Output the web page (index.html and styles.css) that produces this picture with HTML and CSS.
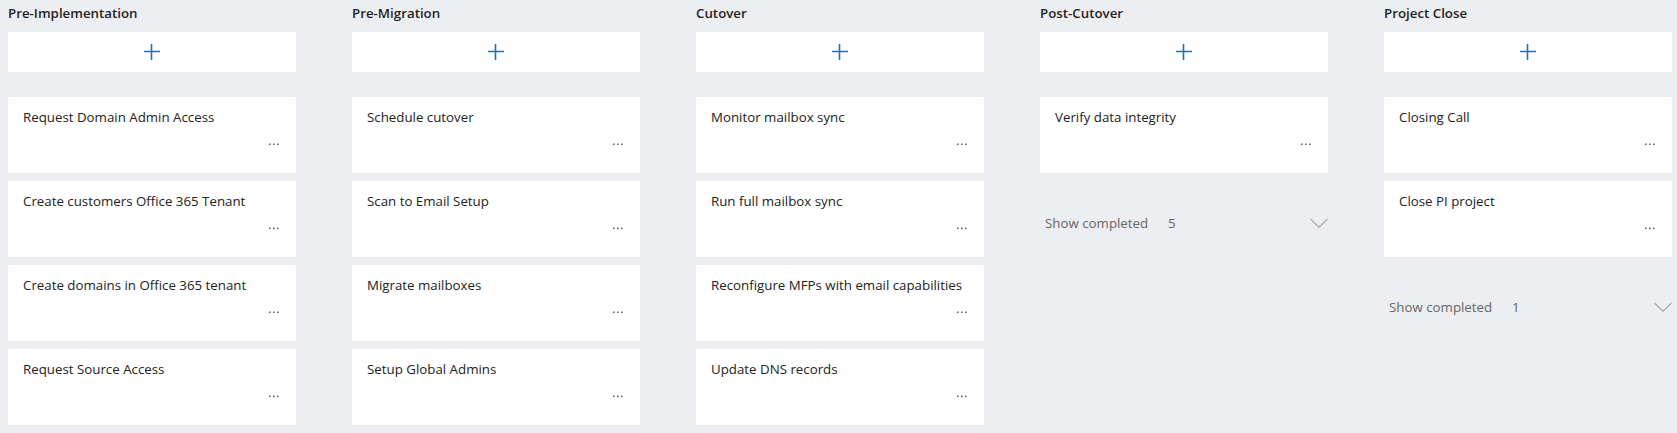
FILE: index.html
```html
<!DOCTYPE html>
<html>
<head>
<meta charset="utf-8">
<link rel="stylesheet" href="styles.css">
</head>
<body>
<div class="board">
  <section class="column">
    <h2 class="col-title">Pre-Implementation</h2>
    <button class="add-card" aria-label="Add task"><svg class="plus" width="16" height="16" viewBox="0 0 16 16"><path d="M0 7.5H16M7.5 0V16" /></svg></button>
    <div class="cards">
      <div class="card"><div class="card-title">Request Domain Admin Access</div><div class="card-more"><svg width="12" height="3" viewBox="0 0 12 3"><rect x="1" y="0.5" width="1.6" height="1.6"/><rect x="5" y="0.5" width="1.6" height="1.6"/><rect x="9" y="0.5" width="1.6" height="1.6"/></svg></div></div>
      <div class="card"><div class="card-title">Create customers Office 365 Tenant</div><div class="card-more"><svg width="12" height="3" viewBox="0 0 12 3"><rect x="1" y="0.5" width="1.6" height="1.6"/><rect x="5" y="0.5" width="1.6" height="1.6"/><rect x="9" y="0.5" width="1.6" height="1.6"/></svg></div></div>
      <div class="card"><div class="card-title">Create domains in Office 365 tenant</div><div class="card-more"><svg width="12" height="3" viewBox="0 0 12 3"><rect x="1" y="0.5" width="1.6" height="1.6"/><rect x="5" y="0.5" width="1.6" height="1.6"/><rect x="9" y="0.5" width="1.6" height="1.6"/></svg></div></div>
      <div class="card"><div class="card-title">Request Source Access</div><div class="card-more"><svg width="12" height="3" viewBox="0 0 12 3"><rect x="1" y="0.5" width="1.6" height="1.6"/><rect x="5" y="0.5" width="1.6" height="1.6"/><rect x="9" y="0.5" width="1.6" height="1.6"/></svg></div></div>
    </div>
  </section>
  <section class="column">
    <h2 class="col-title">Pre-Migration</h2>
    <button class="add-card" aria-label="Add task"><svg class="plus" width="16" height="16" viewBox="0 0 16 16"><path d="M0 7.5H16M7.5 0V16" /></svg></button>
    <div class="cards">
      <div class="card"><div class="card-title">Schedule cutover</div><div class="card-more"><svg width="12" height="3" viewBox="0 0 12 3"><rect x="1" y="0.5" width="1.6" height="1.6"/><rect x="5" y="0.5" width="1.6" height="1.6"/><rect x="9" y="0.5" width="1.6" height="1.6"/></svg></div></div>
      <div class="card"><div class="card-title">Scan to Email Setup</div><div class="card-more"><svg width="12" height="3" viewBox="0 0 12 3"><rect x="1" y="0.5" width="1.6" height="1.6"/><rect x="5" y="0.5" width="1.6" height="1.6"/><rect x="9" y="0.5" width="1.6" height="1.6"/></svg></div></div>
      <div class="card"><div class="card-title">Migrate mailboxes</div><div class="card-more"><svg width="12" height="3" viewBox="0 0 12 3"><rect x="1" y="0.5" width="1.6" height="1.6"/><rect x="5" y="0.5" width="1.6" height="1.6"/><rect x="9" y="0.5" width="1.6" height="1.6"/></svg></div></div>
      <div class="card"><div class="card-title">Setup Global Admins</div><div class="card-more"><svg width="12" height="3" viewBox="0 0 12 3"><rect x="1" y="0.5" width="1.6" height="1.6"/><rect x="5" y="0.5" width="1.6" height="1.6"/><rect x="9" y="0.5" width="1.6" height="1.6"/></svg></div></div>
    </div>
  </section>
  <section class="column">
    <h2 class="col-title">Cutover</h2>
    <button class="add-card" aria-label="Add task"><svg class="plus" width="16" height="16" viewBox="0 0 16 16"><path d="M0 7.5H16M7.5 0V16" /></svg></button>
    <div class="cards">
      <div class="card"><div class="card-title">Monitor mailbox sync</div><div class="card-more"><svg width="12" height="3" viewBox="0 0 12 3"><rect x="1" y="0.5" width="1.6" height="1.6"/><rect x="5" y="0.5" width="1.6" height="1.6"/><rect x="9" y="0.5" width="1.6" height="1.6"/></svg></div></div>
      <div class="card"><div class="card-title">Run full mailbox sync</div><div class="card-more"><svg width="12" height="3" viewBox="0 0 12 3"><rect x="1" y="0.5" width="1.6" height="1.6"/><rect x="5" y="0.5" width="1.6" height="1.6"/><rect x="9" y="0.5" width="1.6" height="1.6"/></svg></div></div>
      <div class="card"><div class="card-title">Reconfigure MFPs with email capabilities</div><div class="card-more"><svg width="12" height="3" viewBox="0 0 12 3"><rect x="1" y="0.5" width="1.6" height="1.6"/><rect x="5" y="0.5" width="1.6" height="1.6"/><rect x="9" y="0.5" width="1.6" height="1.6"/></svg></div></div>
      <div class="card"><div class="card-title">Update DNS records</div><div class="card-more"><svg width="12" height="3" viewBox="0 0 12 3"><rect x="1" y="0.5" width="1.6" height="1.6"/><rect x="5" y="0.5" width="1.6" height="1.6"/><rect x="9" y="0.5" width="1.6" height="1.6"/></svg></div></div>
    </div>
  </section>
  <section class="column">
    <h2 class="col-title">Post-Cutover</h2>
    <button class="add-card" aria-label="Add task"><svg class="plus" width="16" height="16" viewBox="0 0 16 16"><path d="M0 7.5H16M7.5 0V16" /></svg></button>
    <div class="cards">
      <div class="card"><div class="card-title">Verify data integrity</div><div class="card-more"><svg width="12" height="3" viewBox="0 0 12 3"><rect x="1" y="0.5" width="1.6" height="1.6"/><rect x="5" y="0.5" width="1.6" height="1.6"/><rect x="9" y="0.5" width="1.6" height="1.6"/></svg></div></div>
    </div>
    <div class="show-completed"><span class="sc-label">Show completed</span><span class="sc-count">5</span><svg class="chevron" width="18" height="10" viewBox="0 0 18 10"><path d="M0.5 1L9 9.3L17.5 1"/></svg></div>
  </section>
  <section class="column">
    <h2 class="col-title">Project Close</h2>
    <button class="add-card" aria-label="Add task"><svg class="plus" width="16" height="16" viewBox="0 0 16 16"><path d="M0 7.5H16M7.5 0V16" /></svg></button>
    <div class="cards">
      <div class="card"><div class="card-title">Closing Call</div><div class="card-more"><svg width="12" height="3" viewBox="0 0 12 3"><rect x="1" y="0.5" width="1.6" height="1.6"/><rect x="5" y="0.5" width="1.6" height="1.6"/><rect x="9" y="0.5" width="1.6" height="1.6"/></svg></div></div>
      <div class="card"><div class="card-title">Close PI project</div><div class="card-more"><svg width="12" height="3" viewBox="0 0 12 3"><rect x="1" y="0.5" width="1.6" height="1.6"/><rect x="5" y="0.5" width="1.6" height="1.6"/><rect x="9" y="0.5" width="1.6" height="1.6"/></svg></div></div>
    </div>
    <div class="show-completed"><span class="sc-label">Show completed</span><span class="sc-count">1</span><svg class="chevron" width="18" height="10" viewBox="0 0 18 10"><path d="M0.5 1L9 9.3L17.5 1"/></svg></div>
  </section>
</div>
</body>
</html>
```

FILE: styles.css
```css
html, body {
  margin: 0;
  padding: 0;
  background: #edeef2;
  height: 100%;
}
body {
  font-family: "Open Sans", "Noto Sans", sans-serif;
  color: #212121;
  overflow: hidden;
}
.board {
  display: flex;
  gap: 56px;
  padding: 0 8px;
}
.column {
  width: 288px;
  flex: 0 0 288px;
  display: flex;
  flex-direction: column;
}
.col-title {
  margin: 0;
  height: 32px;
  font-size: 13.3px;
  font-weight: 600;
  line-height: 26px;
  color: #1f1f1f;
}
.add-card {
  display: flex;
  align-items: center;
  justify-content: center;
  height: 40px;
  width: 100%;
  border: 0;
  padding: 0;
  margin: 0 0 25px 0;
  background: #ffffff;
  cursor: pointer;
}
.plus path {
  stroke: #2a6cb0;
  stroke-width: 1.6;
  fill: none;
}
.cards {
  display: flex;
  flex-direction: column;
  gap: 8px;
}
.card {
  background: #ffffff;
  height: 76px;
  box-sizing: border-box;
  padding: 10px 16px 0 15px;
  display: flex;
  flex-direction: column;
}
.card-title {
  font-size: 13.3px;
  line-height: 20px;
  color: #222222;
}
.card-more {
  display: flex;
  justify-content: flex-end;
  margin-top: 16px;
}
.card-more rect {
  fill: #666666;
}
.show-completed {
  display: flex;
  align-items: center;
  height: 42px;
  margin-top: 29px;
  padding-left: 5px;
  font-size: 13.3px;
  color: #666666;
}
.sc-label {
  width: 123px;
}
.sc-count {
  flex: 1;
}
.chevron path {
  stroke: #7a7a7a;
  stroke-width: 1;
  fill: none;
}
```
